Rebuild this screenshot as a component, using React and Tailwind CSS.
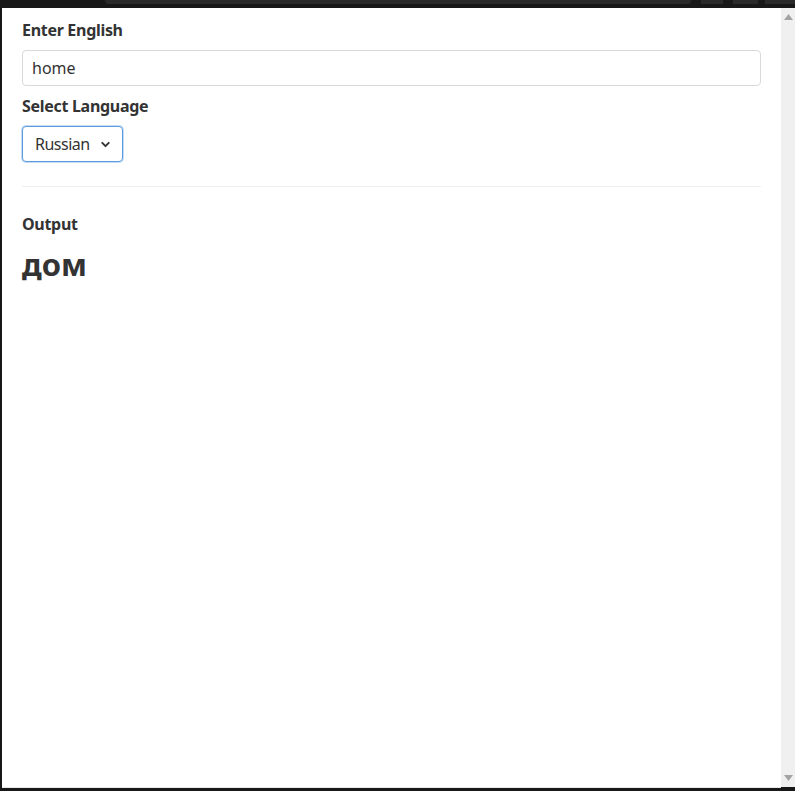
import { ChevronDown } from "lucide-react";

const LANGUAGES = ["Russian", "Spanish", "French", "German"];

/* ─── Window chrome: scrollbar strip ─── */
const Scrollbar = () => (
  <div className="w-[14px] bg-[#f0f0f0] flex flex-col justify-between items-center py-[6px]">
    <svg width="9" height="6" viewBox="0 0 9 6">
      <path d="M4.5 0 9 6H0z" fill="#a3a3a3" />
    </svg>
    <svg width="9" height="6" viewBox="0 0 9 6">
      <path d="M0 0h9L4.5 6z" fill="#a3a3a3" />
    </svg>
  </div>
);

const Label = ({ children, className = "" }) => (
  <p className={`text-[16px] leading-6 font-bold text-[#333] tracking-[-0.3px] ${className}`}>
    {children}
  </p>
);

const App = () => {
  return (
    <div
      className="h-[791px] w-[795px] flex flex-col bg-[#181818] overflow-hidden"
      style={{ fontFamily: "'Noto Sans', 'Open Sans', sans-serif" }}
    >
      {/* top strip */}
      <div className="h-2 flex items-start">
        <div className="w-[105px]" />
        <div className="h-[4px] w-[586px] bg-[#2a2a2a] rounded-b-sm" />
        <div className="w-[10px]" />
        <div className="h-[4px] w-[22px] bg-[#2a2a2a]" />
        <div className="w-[10px]" />
        <div className="h-[4px] w-[25px] bg-[#2a2a2a]" />
        <div className="w-[7px]" />
        <div className="h-[4px] flex-1 bg-[#2a2a2a]" />
      </div>

      <div className="flex flex-1 min-h-0">
        <div className="w-[2px]" />
        <div className="flex-1 bg-white px-5 pt-[10px]">
          <Label>Enter English</Label>
          <input
            defaultValue="home"
            className="mt-2 w-full h-9 px-[9px] rounded-[4px] border border-[#d9d9d9] text-[16px] text-[#333] outline-none"
          />

          <Label className="mt-2">Select Language</Label>
          <div className="mt-2 relative w-[101px] h-9">
            <select
              defaultValue="Russian"
              className="appearance-none w-full h-full pl-3 pr-6 rounded-[4px] border border-[#5b9be0] shadow-[0_0_0_1px_#c6dcf5] text-[16px] tracking-[-0.5px] text-[#333] bg-white outline-none"
            >
              {LANGUAGES.map((l) => (
                <option key={l}>{l}</option>
              ))}
            </select>
            <ChevronDown
              size={13}
              strokeWidth={3.5}
              className="absolute right-[11px] top-[12px] text-[#333] pointer-events-none"
            />
          </div>

          <hr className="mt-[24px] border-t border-[#eeeeee]" />

          <Label className="mt-[25px]">Output</Label>
          <p className="mt-[8px] text-[31px] leading-10 font-bold text-[#333]">дом</p>
        </div>
        <Scrollbar />
      </div>

      {/* bottom edge */}
      <div className="h-[1px] ml-[2px] mr-[14px] bg-[#e8e8e8]" />
      <div className="h-[3px]" />
    </div>
  );
};

export default App;
